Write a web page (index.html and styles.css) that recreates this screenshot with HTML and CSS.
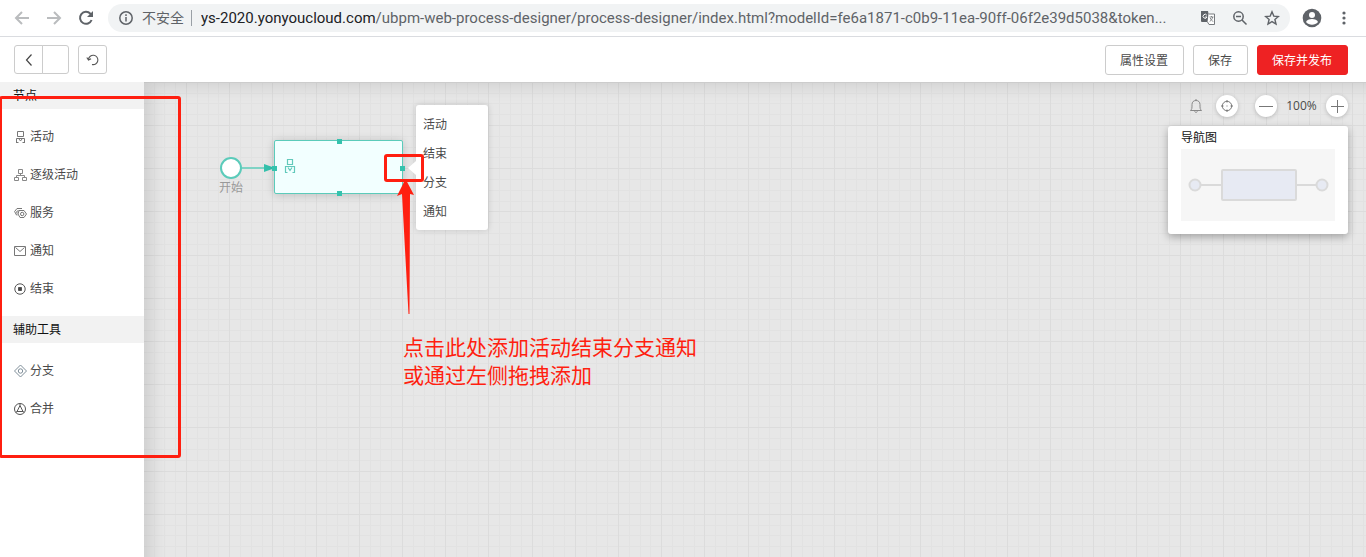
FILE: index.html
```
<!DOCTYPE html>
<html lang="zh-CN">
<head>
<meta charset="utf-8">
<title>流程设计器</title>
<link rel="stylesheet" href="styles.css">
</head>
<body>
<header class="browser-bar">
  <button class="nav-btn" aria-label="后退"><svg width="16" height="16" viewBox="0 0 16 16" fill="none" stroke="#babcbe" stroke-width="2"><path d="M15 8H2M8 2L2 8l6 6"/></svg></button>
  <button class="nav-btn" aria-label="前进"><svg width="16" height="16" viewBox="0 0 16 16" fill="none" stroke="#babcbe" stroke-width="2"><path d="M1 8h13M8 2l6 6-6 6"/></svg></button>
  <button class="nav-btn" aria-label="刷新"><svg width="16" height="16" viewBox="0 0 16 16" fill="none" stroke="#5f6368" stroke-width="2"><path d="M13.6 10A6 6 0 1 1 12.400 3.700L14 5.400"/><path d="M15 1v6H9z" fill="#5f6368" stroke="none"/></svg></button>
  <div class="address">
    <svg width="14" height="14" viewBox="0 0 14 14" fill="none" stroke="#5f6368" stroke-width="1.500"><circle cx="7" cy="7" r="6.200"/><path d="M7 6v4.500M7 3.300v1.600"/></svg>
    <span class="insecure">不安全</span>
    <span class="url"><span class="host">ys-2020.yonyoucloud.com</span>/ubpm-web-process-designer/process-designer/index.html?modelId=fe6a1871-c0b9-11ea-90ff-06f2e39d5038&amp;token...</span>
    <div class="address-tools">
      <button class="nav-btn" aria-label="翻译"><svg width="16" height="16" viewBox="0 0 16 16"><path d="M1 1h7l2 11H2a1 1 0 0 1-1-1z" fill="#5f6368"/><path d="M8.500 4H14.500v10.500H9L7.500 12" fill="#fff" stroke="#777a7e"/><path d="M6.800 5.200A2 2 0 1 0 7 7H5.200" fill="none" stroke="#fff"/><path d="M9.500 7h4M11.500 6v1M12.700 7c-.4 2-1.500 3.500-3 4.500M10.300 8c.5 1.500 1.500 2.800 3 3.500" fill="none" stroke="#777a7e" stroke-width=".9"/></svg></button>
      <button class="nav-btn" aria-label="缩小"><svg width="16" height="16" viewBox="0 0 16 16" fill="none" stroke="#5f6368" stroke-width="1.500"><circle cx="6.500" cy="6.500" r="4.700"/><path d="M10 10l4.500 4.500M4 6.500h5"/></svg></button>
      <button class="nav-btn" aria-label="收藏"><svg width="16" height="16" viewBox="0 0 16 16" fill="none" stroke="#5f6368" stroke-width="1.400"><path d="M8 1.800l1.800 4.300 4.600.4-3.500 3 1.100 4.500L8 11.600 4 14l1.100-4.500-3.500-3 4.600-.4z"/></svg></button>
    </div>
  </div>
  <button class="nav-btn avatar" aria-label="用户"><svg width="20" height="20" viewBox="0 0 20 20"><circle cx="10" cy="10" r="9.300" fill="#5f6368"/><circle cx="10" cy="7" r="3" fill="#fff"/><path d="M4 14c1-4 11-4 12 0-3 3.700-9 3.700-12 0z" fill="#fff"/></svg></button>
  <button class="nav-btn more" aria-label="更多"><svg width="4" height="14" viewBox="0 0 4 14" fill="#5f6368"><circle cx="2" cy="2" r="1.600"/><circle cx="2" cy="7" r="1.600"/><circle cx="2" cy="12" r="1.600"/></svg></button>
</header>

<div class="toolbar">
  <div class="history">
    <button class="tool-btn back" aria-label="返回"><svg width="14" height="14" viewBox="0 0 14 14" fill="none" stroke="#444" stroke-width="1.200"><path d="M9.500 1.500L4.500 7l5 5.500"/></svg></button>
    <button class="tool-btn blank" aria-label="撤销"></button>
    <button class="tool-btn redo" aria-label="重置"><svg width="14" height="14" viewBox="0 0 14 14" fill="none" stroke="#555" stroke-width="1.100"><path d="M2.500 6.500A4.700 4.700 0 1 1 6 11.500M.8 4.500L2.500 7l2.600-1.300"/></svg></button>
  </div>
  <div class="actions">
    <button class="action">属性设置</button>
    <button class="action">保存</button>
    <button class="action primary">保存并发布</button>
  </div>
</div>

<main class="workspace">
  <aside class="sidebar">
    <h2 class="group-title">节点</h2>
    <ul class="palette">
      <li><svg width="13" height="14" viewBox="0 0 13 14" fill="none" stroke="#777"><path d="M3.500 1.500h6v5h-6zM2.500 13V8.500h8V13M2 12.500h2.500M8.500 12.500H11M5 9l1.500 2L8 9"/></svg>活动</li>
      <li><svg width="13" height="14" viewBox="0 0 13 14" fill="none" stroke="#888"><path d="M4.500 1.500h4v4h-4zM.5 9.500h4v3h-4zM8.500 9.500h4v3h-4zM6.500 5.500v2M2.500 9.500v-2h8v2"/></svg>逐级活动</li>
      <li><svg width="13" height="14" viewBox="0 0 13 14" fill="none" stroke="#777"><path d="M5 4.500h5L12.500 8 10 11.500H6L4 8z"/><circle cx="8.200" cy="8" r="1.700"/><path d="M8 2.500H3L.6 5.500 2.500 9h1M4.500 4.500L2.700 5.500l.3 2"/></svg>服务</li>
      <li><svg width="13" height="14" viewBox="0 0 13 14" fill="none" stroke="#777"><path d="M.5 2.500h11v9H.5zM1.500 3.500L6 7.500l4.500-4"/></svg>通知</li>
      <li><svg width="13" height="14" viewBox="0 0 13 14" fill="none" stroke="#555"><circle cx="6" cy="7" r="5.200"/><path d="M4.500 5.500h3v3h-3z" fill="#444"/></svg>结束</li>
    </ul>
    <h2 class="group-title">辅助工具</h2>
    <ul class="palette">
      <li><svg width="13" height="14" viewBox="0 0 13 14" fill="none" stroke="#7e8d98"><path d="M6.500 1l6 6-6 6-6-6z"/><circle cx="6.500" cy="7" r="2.200"/></svg>分支</li>
      <li><svg width="13" height="14" viewBox="0 0 13 14" fill="none" stroke="#555"><circle cx="6" cy="7" r="5.500"/><path d="M6 3.500L3 9.500h6zM6 1.500v2M3 9.500l-1.300 1M9 9.500l1.300 1"/></svg>合并</li>
    </ul>
  </aside>

  <section class="canvas" aria-label="流程画布">
    <svg class="grid" width="100%" height="100%" aria-hidden="true">
      <defs>
        <pattern id="grid" x="42" y="43" width="216" height="216" patternUnits="userSpaceOnUse">
          <path stroke="#e2e2e2" d="M11.500 0v216M22.500 0v216M32.500 0v216M54.500 0v216M65.500 0v216M76.500 0v216M97.500 0v216M108.500 0v216M119.500 0v216M140.500 0v216M151.500 0v216M162.500 0v216M184.500 0v216M194.500 0v216M205.500 0v216M0 11.500h216M0 22.500h216M0 32.500h216M0 54.500h216M0 65.500h216M0 76.500h216M0 97.500h216M0 108.500h216M0 119.500h216M0 140.500h216M0 151.500h216M0 162.500h216M0 184.500h216M0 194.500h216M0 205.500h216"/>
          <path stroke="#dcdcdc" d="M.5 0v216M43.500 0v216M86.500 0v216M130.500 0v216M173.500 0v216M0 .5h216M0 43.500h216M0 86.500h216M0 130.500h216M0 173.500h216"/>
        </pattern>
      </defs>
      <rect width="100%" height="100%" fill="url(#grid)"/>
    </svg>
    <div class="edge-shade"></div>

    <svg class="flow-line" width="60" height="12" viewBox="0 0 60 12"><path d="M10 6h40" stroke="#7fd3c5" stroke-width="2"/><path d="M32 2l11 4-11 4z" fill="#35c2ad"/></svg>
    <div class="start-node"></div>
    <span class="start-label">开始</span>

    <div class="activity">
      <svg class="activity-icon" width="12" height="16" viewBox="0 0 12 16" fill="none" stroke="#62c9bb" stroke-width="1.200"><path d="M3.500 1.500h5v5h-5zM1.500 14.500V8.500h9V14.500M1 14.500h2.500M8.500 14.500H11M4 9.500L6 12.500l2-3"/></svg>
      <i class="handle top"></i><i class="handle right"></i><i class="handle bottom"></i><i class="handle left"></i>
    </div>

    <div class="next-menu">
      <button>活动</button><button>结束</button><button>分支</button><button>通知</button>
    </div>

    <div class="view-tools">
      <div class="zoom-row">
        <button class="bell" aria-label="提醒"><svg width="14" height="16" viewBox="0 0 14 16" fill="none" stroke="#888"><path d="M1.500 12.500h11c-1.500-1.500-1.500-2-1.500-6 0-2.500-1.500-4-4-4s-4 1.500-4 4c0 4 0 4.500-1.500 6zM7 1v1.500M5.500 13.500c.5 1 2.500 1 3 0"/></svg></button>
        <button class="round locate" aria-label="定位"><svg width="14" height="14" viewBox="0 0 14 14" fill="none" stroke="#777"><circle cx="7" cy="7" r="4.700"/><path d="M7 1v2.500M7 10.500V13M1 7h2.500M10.500 7H13M6.500 7h1"/></svg></button>
        <button class="round" aria-label="缩小画布"><svg width="14" height="14" viewBox="0 0 14 14" stroke="#777"><path d="M0 7.500h14"/></svg></button>
        <span class="percent">100%</span>
        <button class="round" aria-label="放大画布"><svg width="14" height="14" viewBox="0 0 14 14" stroke="#777"><path d="M1 7.500h13M7.500 1v13"/></svg></button>
      </div>
      <div class="navigator">
        <h3 class="navigator-title">导航图</h3>
        <div class="minimap">
          <svg width="142" height="34" viewBox="0 0 142 34" fill="#e7eaf3" stroke="#dadada" stroke-width="2"><path d="M12 17h22M108 17h22"/><circle cx="8" cy="17" r="5.500"/><circle cx="135" cy="17" r="5.500"/><rect x="35" y="2" width="74" height="30" rx="1"/></svg>
        </div>
      </div>
    </div>
  </section>
</main>

<div class="mark mark-palette"></div>
<div class="mark mark-handle"></div>
<svg class="mark-arrow" width="20" height="136" viewBox="0 0 20 136" fill="#ff1f10"><path d="M8.500 0L17 16l-4-1-.5 120h-1L5 15l-5 2z"/></svg>
<p class="mark-note">点击此处添加活动结束分支通知<br>或通过左侧拖拽添加</p>
</body>
</html>
```

FILE: styles.css
```
* { box-sizing: border-box; }
body {
  margin: 0;
  min-height: 100vh;
  display: flex;
  flex-direction: column;
  position: relative;
  overflow: hidden;
  background: #fff;
  color: #4a4a4a;
  font: 12px/18px "Open Sans", "Noto Sans CJK SC", sans-serif;
}
button { font: inherit; color: inherit; padding: 0; border: 0; background: none; cursor: pointer; }
svg { display: block; flex: none; }
h2, h3, ul, p { margin: 0; padding: 0; font-weight: 400; list-style: none; }

.browser-bar {
  display: flex;
  align-items: center;
  gap: 16px;
  height: 37px;
  padding: 0 20px 0 14px;
  border-bottom: 1px solid #dadce0;
}
.nav-btn { flex: none; }
.address {
  flex: 1;
  min-width: 0;
  display: flex;
  align-items: center;
  height: 28px;
  margin-right: -4px;
  margin-left: -2px;
  padding: 0 10px 0 11px;
  border-radius: 14px;
  background: #f1f3f4;
  color: #5f6368;
  font-size: 14px;
}
.insecure { flex: none; margin-left: 9px; padding-right: 7px; border-right: 1px solid #9aa0a6; line-height: 16px; }
.url { flex: 1; min-width: 0; margin-left: 9px; overflow: hidden; white-space: nowrap; font-family: Roboto, "Open Sans", sans-serif; font-size: 15px; }
.host { color: #202124; }
.address-tools { display: flex; gap: 16px; margin-left: 16px; }
.more { margin-left: 4px; }

.toolbar {
  display: flex;
  justify-content: space-between;
  padding: 8px 18px 7px 14px;
}
.history, .actions { display: flex; }
.tool-btn {
  display: flex;
  align-items: center;
  justify-content: center;
  width: 29px;
  height: 29px;
  border: 1px solid #ccc;
  border-radius: 3px;
}
.back { border-radius: 3px 0 0 3px; }
.blank { width: 27px; margin-left: -1px; border-radius: 0 3px 3px 0; }
.redo { margin-left: 9px; }
.actions { gap: 9px; }
.action { height: 30px; padding: 2px 15px 0 14px; border: 1px solid #ccc; border-radius: 3px; }
.primary { border-color: #ee2223; background: #ee2223; color: #fff; }

.workspace { flex: 1; display: flex; }
.sidebar { width: 144px; flex: none; background: #fff; }
.group-title { padding: 1px 13px 0; background: #f2f2f2; color: #111; font-size: 12px; line-height: 26px; }
.palette { padding: 8px 13px 9px; }
.palette li { display: flex; align-items: center; gap: 3px; height: 38px; padding: 1px 0 0 1px; }

.canvas { flex: 1; position: relative; overflow: hidden; background: #e7e7e7; }
.grid { position: absolute; inset: 0; }
.edge-shade { position: absolute; inset: 0 -20px -20px 0; box-shadow: inset 6px 3px 18px rgba(0, 0, 0, .12); }
.flow-line { position: absolute; left: 88px; top: 80px; }
.start-node {
  position: absolute;
  left: 76px;
  top: 75px;
  width: 22px;
  height: 22px;
  border: 2px solid #5bcbba;
  border-radius: 50%;
  background: #fff;
}
.start-label { position: absolute; left: 75px; top: 97px; color: #999; }
.activity {
  position: absolute;
  left: 130px;
  top: 58px;
  width: 129px;
  height: 54px;
  border: 1px solid #5bcbba;
  border-radius: 2px;
  background: #f2ffff;
  box-shadow: 0 1px 10px rgba(0, 0, 0, .18);
}
.activity-icon { margin: 17px 9px; }
.handle { position: absolute; width: 5px; height: 5px; background: #35c2ad; }
.handle.top { left: 62px; top: -2px; }
.handle.bottom { left: 62px; bottom: -3px; }
.handle.left { left: -3px; top: 25px; }
.handle.right { right: -3px; top: 25px; }
.next-menu {
  position: absolute;
  left: 272px;
  top: 23px;
  width: 72px;
  padding: 5px 0 4px;
  border-radius: 3px;
  background: #fff;
  box-shadow: 0 0 6px rgba(0, 0, 0, .15);
}
.next-menu::before {
  content: "";
  position: absolute;
  left: -8px;
  top: 56px;
  border: solid transparent;
  border-width: 7px 8px 7px 0;
  border-right-color: #fff;
}
.next-menu button { display: block; width: 100%; height: 29px; padding: 0 7px; text-align: left; }

.view-tools { position: absolute; right: 18px; top: 13px; width: 180px; }
.zoom-row { display: flex; align-items: center; justify-content: flex-end; height: 22px; margin-bottom: 9px; }
.bell { margin-right: 13px; }
.round {
  display: flex;
  align-items: center;
  justify-content: center;
  width: 22px;
  height: 22px;
  border-radius: 50%;
  background: #fff;
  box-shadow: 0 1px 4px rgba(0, 0, 0, .2);
}
.locate { margin-right: 17px; }
.percent { width: 49px; text-align: center; }
.navigator { padding: 3px 13px 13px; border-radius: 3px; background: #fff; box-shadow: 0 3px 8px rgba(0, 0, 0, .3); }
.navigator-title { margin-bottom: 2px; color: #111; font-size: 12px; }
.minimap { display: flex; align-items: center; justify-content: center; height: 72px; background: #f6f6f6; }

.mark { position: absolute; border: 3px solid #ff1f10; border-radius: 3px; }
.mark-palette { left: -1px; top: 96px; width: 182px; height: 362px; }
.mark-handle { left: 384px; top: 154px; width: 40px; height: 28px; }
.mark-arrow { position: absolute; left: 397px; top: 179px; }
.mark-note { position: absolute; left: 403px; top: 333px; color: #ff1f10; font-size: 21px; line-height: 28px; }
```
